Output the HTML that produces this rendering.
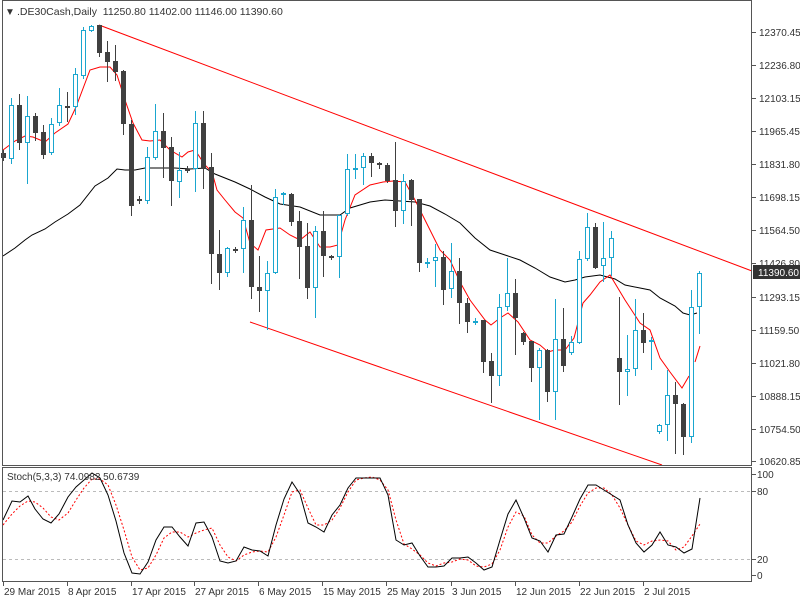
<!DOCTYPE html>
<html><head><meta charset="utf-8"><style>
html,body{margin:0;padding:0;background:#fff;width:800px;height:600px;overflow:hidden}
svg{display:block;font-family:"Liberation Sans",sans-serif}
</style></head><body>
<svg id="s" width="800" height="600" xmlns="http://www.w3.org/2000/svg" shape-rendering="crispEdges">
<rect x="0" y="0" width="800" height="600" fill="#fff"/>
<g id="g"></g>
<rect x="2.5" y="0.5" width="749" height="465" fill="none" stroke="#555"/>
<rect x="2.5" y="467.5" width="749" height="114" fill="none" stroke="#555"/>
<text x="5" y="15" font-size="10" fill="#333">▼</text>
<text x="17" y="15" font-size="10.5" fill="#333">.DE30Cash,Daily&#160; 11250.80 11402.00 11146.00 11390.60</text>
<text x="7" y="480" font-size="10" fill="#333">Stoch(5,3,3) 74.0982 50.6739</text>
</svg>
<script>
var g=document.getElementById('g'),h='';
var C=[[153,158,150,160],[159,105,98,163],[105,143,94,149],[143,116,96,183],[116,133,113,140],[132,155,125,158],[153,124,118,154],[123,105,88,125],[106,107,92,121],[107,74,68,114],[76,30,27,78],[31,26,25,31],[25,53,25,56],[52,62,41,81],[61,72,45,80],[71,124,70,134],[124,206,120,215],[199,201,196,203],[201,157,147,203],[158,131,104,159],[131,148,113,177],[147,181,137,205],[182,170,152,197],[169,170,166,172],[169,123,111,191],[123,169,111,188],[167,254,153,283],[254,273,230,289],[273,248,247,276],[249,250,247,252],[249,220,207,272],[220,287,185,298],[287,291,256,311],[291,273,261,329],[273,197,189,273],[195,193,192,204],[194,222,193,225],[221,247,211,278],[246,288,223,298],[288,231,226,317],[231,256,211,276],[256,258,255,259],[257,215,215,277],[214,169,154,215],[169,168,154,178],[168,156,153,184],[156,163,153,176],[163,165,162,168],[165,181,163,182],[180,211,142,226],[211,181,174,223],[180,200,179,225],[199,263,199,271],[263,262,258,267],[261,257,244,286],[257,290,251,304],[289,271,243,297],[271,303,258,323],[303,322,298,332],[322,321,318,324],[320,362,320,372],[361,376,353,402],[376,307,294,385],[307,293,258,310],[293,318,279,354],[333,342,332,344],[341,368,341,381],[368,350,348,419],[350,392,349,401],[392,339,299,419],[339,366,308,371],[353,342,336,354],[343,259,251,343],[259,227,213,260],[227,268,223,268],[266,258,222,281],[258,238,231,275],[358,372,297,404],[372,369,335,395],[369,330,299,375],[330,343,313,352],[342,340,337,369],[432,425,424,433],[425,395,370,440],[395,404,382,453],[404,437,403,454],[437,307,290,442],[307,273,271,333]];
function L(x1,y1,x2,y2,c,e){return '<line x1="'+x1+'" y1="'+y1+'" x2="'+x2+'" y2="'+y2+'" stroke="'+c+'" '+(e||'')+'/>';}
function P(p,c,e){return '<polyline fill="none" stroke="'+c+'" shape-rendering="auto" '+(e||'')+' points="'+p.map(function(q){return q.join(',')}).join(' ')+'"/>';}
// grid-free; stoch levels
h+=L(3,491.5,751,491.5,'#bbb','stroke-dasharray="3,3"');
h+=L(3,559.5,751,559.5,'#bbb','stroke-dasharray="3,3"');
// MAs
h+=P([[3,256],[15,248],[25,240],[32,235],[45,229],[55,222],[68,214],[80,205],[95,186],[108,178],[117,169],[125,170],[135,170],[145,168],[160,168],[175,168],[190,169],[205,168],[215,174],[235,182],[250,189],[265,197],[280,204],[300,207],[320,215],[340,215],[350,208],[370,202],[385,200],[400,201],[415,202],[430,206],[445,214],[460,223],[475,238],[490,250],[505,255],[520,260],[535,268],[550,277],[565,282],[575,280],[585,277],[600,275],[615,279],[625,285],[640,288],[650,290],[660,298],[675,306],[683,313],[690,315],[697,313]],'#000');
h+=P([[3,150],[15,141],[25,136],[33,137],[45,142],[55,133],[68,124],[76,107],[90,70],[100,67],[110,67],[117,75],[125,100],[133,123],[142,140],[150,141],[160,140],[170,150],[182,157],[188,152],[195,150],[205,165],[212,172],[217,190],[225,200],[235,212],[243,218],[250,243],[258,250],[266,230],[280,228],[290,235],[300,240],[310,232],[320,247],[330,247],[338,245],[345,220],[355,195],[370,185],[383,182],[393,181],[405,182],[415,200],[425,220],[440,250],[450,260],[460,282],[470,300],[485,320],[491,325],[500,318],[508,313],[518,322],[530,340],[540,345],[548,352],[555,350],[565,350],[574,338],[583,303],[590,295],[600,282],[610,275],[625,300],[640,323],[650,330],[660,358],[670,372],[682,388],[689,376]],'#f00');
h+=P([[695,362],[700,346]],'#f00');
// trend lines
h+=L(99,25,752,271,'#f00','shape-rendering="auto"');
h+=L(250,322,662,465,'#f00','shape-rendering="auto"');
// candles
for(var i=0;i<C.length;i++){var c=C[i],x=3.5+8*i,o=c[0],cl=c[1],hi=c[2],lo=c[3];
 var bull=cl<o,col=bull?'#1aa6cf':'#404040';
 h+=L(x,hi,x,lo+1,col);
 var t=Math.min(o,cl),b=Math.max(o,cl);
 if(b-t<2){h+='<rect x="'+(x-2.5)+'" y="'+t+'" width="5" height="2" fill="'+col+'"/>';continue;}
 if(bull)h+='<rect x="'+(x-2)+'" y="'+(t+0.5)+'" width="4" height="'+(b-t-1)+'" fill="#fff" stroke="'+col+'"/>';
 else h+='<rect x="'+(x-2.5)+'" y="'+t+'" width="5" height="'+(b-t)+'" fill="'+col+'"/>';}
// stoch
var K=[[3,520],[12,501],[20,502],[28,496],[35,509],[43,519],[51,523],[59,514],[68,497],[76,487],[84,480],[92,473],[100,478],[108,495],[116,521],[124,553],[132,573],[140,574],[148,562],[156,540],[164,527],[172,527],[180,537],[188,546],[196,523],[204,522],[212,537],[220,561],[228,563],[236,561],[244,547],[252,550],[260,551],[268,556],[276,525],[284,499],[292,482],[300,494],[308,523],[316,527],[324,532],[332,515],[340,505],[348,488],[356,478],[364,478],[372,478],[380,478],[388,495],[396,540],[404,545],[412,543],[420,556],[428,567],[436,567],[444,566],[452,558],[460,558],[468,557],[476,563],[484,570],[492,567],[500,540],[508,514],[516,500],[524,518],[532,538],[540,541],[548,552],[556,535],[564,534],[572,517],[580,499],[588,485],[596,485],[604,490],[612,495],[620,500],[628,525],[636,543],[644,552],[652,545],[660,532],[668,545],[676,547],[684,553],[692,549],[700,498]];
var D=[[3,525],[12,514],[20,506],[28,501],[35,502],[43,508],[51,517],[59,520],[68,513],[76,500],[84,488],[92,479],[100,479],[108,485],[116,505],[124,530],[132,557],[140,570],[148,568],[156,555],[164,538],[172,532],[180,532],[188,537],[196,533],[204,530],[212,528],[220,545],[228,557],[236,561],[244,555],[252,552],[260,551],[268,552],[276,537],[284,515],[292,492],[300,490],[308,508],[316,525],[324,525],[332,520],[340,508],[348,492],[356,480],[364,478],[372,477],[380,480],[388,490],[396,520],[404,544],[412,549],[420,555],[428,563],[436,566],[444,563],[452,562],[460,559],[468,560],[476,566],[484,567],[492,564],[500,550],[508,527],[516,512],[524,516],[532,535],[540,543],[548,543],[556,536],[564,531],[572,522],[580,506],[588,493],[596,488],[604,488],[612,495],[620,508],[628,525],[636,541],[644,545],[652,541],[660,540],[668,541],[676,550],[684,547],[692,536],[700,524]];
h+=P(D,'#f00','stroke-dasharray="2,2"');
h+=P(K,'#000');
// price axis
var pr=[['12370.45',32],['12236.80',65],['12103.15',98],['11965.45',131],['11831.80',164],['11698.15',197],['11564.50',230],['11426.80',263],['11293.15',297],['11159.50',330],['11021.80',363],['10888.15',396],['10754.50',429],['10620.85',461]];
pr.forEach(function(p){h+=L(752,p[1]+0.5,756,p[1]+0.5,'#555');h+='<text x="759" y="'+(p[1]+4)+'" font-size="10" fill="#333">'+p[0]+'</text>';});
h+='<rect x="753" y="265" width="47" height="14" fill="#333"/><text x="758" y="276" font-size="10" fill="#fff">11390.60</text>';
[['100',474],['80',491],['20',559],['0',575]].forEach(function(p){h+=L(752,p[1]+0.5,756,p[1]+0.5,'#555');h+='<text x="757" y="'+(p[1]+4)+'" font-size="10" fill="#333">'+p[0]+'</text>';});
var dt=[['29 Mar 2015',3],['8 Apr 2015',67],['17 Apr 2015',131],['27 Apr 2015',194],['6 May 2015',258],['15 May 2015',322],['25 May 2015',386],['3 Jun 2015',451],['12 Jun 2015',515],['22 Jun 2015',579],['2 Jul 2015',643]];
dt.forEach(function(d){h+=L(d[1]+0.5,582,d[1]+0.5,586,'#555');h+='<text x="'+(d[1]+1)+'" y="595" font-size="10" fill="#333">'+d[0]+'</text>';});
g.innerHTML=h;
</script>
</body></html>
